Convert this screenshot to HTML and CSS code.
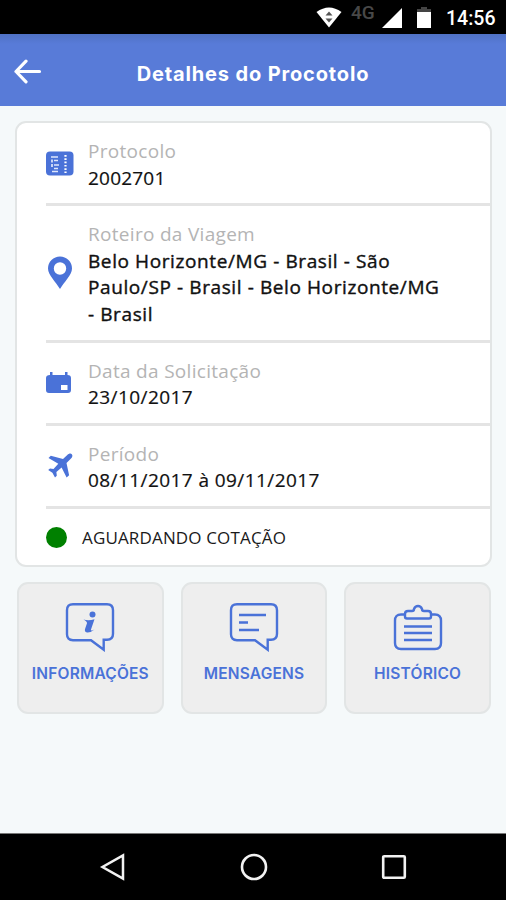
FILE: index.html
```html
<!DOCTYPE html>
<html lang="pt-BR">
<head>
    <meta charset="UTF-8">
    <meta name="viewport" content="width=device-width, initial-scale=1.0">
    <title>Detalhes do Procotolo</title>
    <link rel="stylesheet" href="styles.css">
</head>
<body>

<div class="screen">
    <div class="status-bar">
        <svg class="wifi" width="26" height="21" viewBox="0 0 26 21">
            <path d="M0.5 5 Q13 -4 25.500 5 L13 20.500Z" fill="#fff"/>
            <path d="M9.500 8.500 13 4.500l3.500 4zM9.500 11.500h7L13 15.500z" fill="#555"/>
        </svg>
        <span class="network">4G</span>
        <svg class="signal" width="20" height="20" viewBox="0 0 20 20"><path d="M20 0v20H0z" fill="#fff"/></svg>
        <svg class="battery" width="14" height="21" viewBox="0 0 14 21">
            <path d="M4 0h6v2h4v4H0V2h4z" fill="#444"/>
            <path d="M0 5h14v16H0z" fill="#fff"/>
        </svg>
        <span class="clock">14:56</span>
    </div>

    <header class="header">
        <svg class="back" width="28" height="26" viewBox="0 0 28 26" fill="none" stroke="#fff" stroke-width="3.200" stroke-linecap="round" stroke-linejoin="round">
            <path d="M25.500 12.500H2M12 2.200 2 12.500 12 22.800"/>
        </svg>
        <h1>Detalhes do Procotolo</h1>
    </header>

    <main class="content">
        <section class="card">
            <div class="row">
                <svg class="icon" width="28" height="26" viewBox="0 0 28 26">
                    <rect x="0" y="0.500" width="27.500" height="24" rx="4" fill="#4a72d8"/>
                    <path d="M5 6h7M8 9.500h4M8 14h5M8 17.500h4M6 20.500h6M6 8.500v3M6 13v3" stroke="#dfe7fb" stroke-width="1.700"/>
                    <path d="M19.500 4v18" stroke="#fff" stroke-width="2.200" stroke-dasharray="1.700 1.600"/>
                </svg>
                <div class="info">
                    <p class="label">Protocolo</p>
                    <p class="value value-protocol">2002701</p>
                </div>
            </div>

            <div class="row">
                <svg class="icon" width="28" height="34" viewBox="0 0 28 34">
                    <path d="M14 33C10 26 2 19 2 12.500a12 12 0 0 1 24 0C26 19 18 26 14 33zM14 6.300a6.200 6.200 0 1 0 0 12.400a6.200 6.200 0 0 0 0-12.400z" fill="#4a72d8" fill-rule="evenodd"/>
                </svg>
                <div class="info">
                    <p class="label">Roteiro da Viagem</p>
                    <p class="value value-route">Belo Horizonte/MG - Brasil - São Paulo/SP - Brasil - Belo Horizonte/MG <span class="nowrap">- Brasil</span></p>
                </div>
            </div>

            <div class="row">
                <svg class="icon" width="28" height="22" viewBox="0 0 28 22">
                    <path d="M4 0h2.500v3H19V0h2.500v3Q25 3 25 6v12q0 3-3 3H3q-3 0-3-3V6q0-3 4-3zM15 13v5h6.500v-5z" fill="#4a72d8" fill-rule="evenodd"/>
                </svg>
                <div class="info">
                    <p class="label">Data da Solicitação</p>
                    <p class="value">23/10/2017</p>
                </div>
            </div>

            <div class="row">
                <svg class="icon" width="28" height="26" viewBox="0 0 28 26">
                    <path d="M25.800 1.200C24.700 0 22.800.600 21.300 2L17 6 4.800 2.800 2.500 5l9.800 5.700L7.500 16 4 15.500 2.200 17l4.200 2.700L9 24.500l1.800-1.800-.4-3.600 5.200-4.600 5 9.900 2.500-2.200L20.500 10 25 5.500c1.400-1.500 1.900-3.100.8-4.300z" fill="#4a72d8"/>
                </svg>
                <div class="info">
                    <p class="label">Período</p>
                    <p class="value">08/11/2017 à 09/11/2017</p>
                </div>
            </div>

            <div class="status">
                <span class="dot"></span>
                <span class="status-text">AGUARDANDO COTAÇÃO</span>
            </div>
        </section>

        <nav class="actions">
            <a class="action">
                <svg width="50" height="50" viewBox="0 0 50 50" fill="none" stroke="#4a72d8" stroke-width="2.400">
                    <path d="M8 2.200h34q6 0 6 6v23.500q0 6-6 6h-3.300v10L26 38.200H8q-6 0-6-6v-24q0-6 6-6z"/>
                    <circle cx="27.500" cy="12.500" r="3" fill="#4a72d8" stroke="none"/>
                    <path d="M18.500 17.500q5 1.500 11-.3l-3.600 10.600q0 1.500 3.600-.4-4.500 3.600-7.500 3.100-3-.6-1.800-4l1.800-5.200q.300-1.500-3.500-3.800z" fill="#4a72d8" stroke="none"/>
                </svg>
                <span>INFORMAÇÕES</span>
            </a>
            <a class="action">
                <svg width="50" height="50" viewBox="0 0 50 50" fill="none" stroke="#4a72d8" stroke-width="2.400">
                    <path d="M8 2.200h34q6 0 6 6v23.500q0 6-6 6h-3.300v10L26 38.200H8q-6 0-6-6v-24q0-6 6-6z"/>
                    <path d="M10 13h27M10 20.500h9M10 28h20"/>
                </svg>
                <span>MENSAGENS</span>
            </a>
            <a class="action">
                <svg width="50" height="50" viewBox="0 0 50 50" fill="none" stroke="#4a72d8" stroke-width="2.400">
                    <path d="M12 12.500H8q-6 0-6 6V41q0 6 6 6h34q6 0 6-6V18.500q0-6-6-6h-4"/>
                    <path d="M12 12q0-3 3-3h4q2 0 2-2 1.200-3 4-3t4 3q0 2 2 2h4q3 0 3 3v2.500q0 2-2 2H14q-2 0-2-2z"/>
                    <path d="M11 24.500h28M11 31h28M11 38h28"/>
                </svg>
                <span>HISTÓRICO</span>
            </a>
        </nav>
    </main>

    <div class="nav-bar">
        <svg width="28" height="28" viewBox="0 0 28 28" fill="none" stroke="#f2f2f2" stroke-width="2.500"><path d="M24 2.500v23L3.500 14z"/></svg>
        <svg width="28" height="28" viewBox="0 0 28 28" fill="none" stroke="#f2f2f2" stroke-width="2.600"><circle cx="14" cy="14" r="12"/></svg>
        <svg width="28" height="28" viewBox="0 0 28 28" fill="none" stroke="#f2f2f2" stroke-width="2.600"><rect x="3.200" y="3.200" width="21.600" height="21.600" rx="1"/></svg>
    </div>
</div>

</body>
</html>
```
FILE: styles.css
```css
* {
    box-sizing: border-box;
}
body {
    margin: 0;
    font-family: "Open Sans", "Noto Sans", sans-serif;
    background-color: #f5f9fa;
}
h1, p {
    margin: 0;
}
svg {
    display: block;
    flex-shrink: 0;
}
.screen {
    height: 900px;
    display: flex;
    flex-direction: column;
    overflow: hidden;
}

/* Android status bar */
.status-bar {
    height: 34px;
    padding: 0 10px 0 316px;
    display: flex;
    align-items: flex-start;
    background-color: #000;
    color: #fff;
    font-family: Roboto, sans-serif;
    white-space: nowrap;
}
.wifi {
    margin-top: 7px;
}
.network {
    width: 25px;
    margin: 3px 6px 0 9px;
    color: #484848;
    font-size: 19px;
    font-weight: 500;
    line-height: 20px;
}
.signal {
    margin-top: 8px;
}
.battery {
    margin: 7px 0 0 15px;
}
.clock {
    margin: 7px 0 0 15px;
    font-size: 19.5px;
    font-weight: 500;
    line-height: 24px;
}

.header {
    height: 72px;
    padding: 4px 14px 0;
    display: grid;
    grid-template-columns: 28px 1fr 28px;
    align-items: center;
    background: linear-gradient(#4f71c4, #587bd8 10px);
    color: #fff;
}
.header h1 {
    font-family: Inter, sans-serif;
    font-size: 20px;
    font-weight: 700;
    letter-spacing: 0.85px;
    line-height: 26px;
    text-align: center;
    white-space: nowrap;
    padding-top: 3px;
}

.content {
    flex: 1;
    padding: 15px 14px 0 15px;
}
.card {
    height: 446px;
    border: 2px solid #e2e5e5;
    border-radius: 11px;
    background-color: #fff;
}
.row {
    display: flex;
    align-items: center;
    margin-left: 29px;
    padding: 13px 40px 12px 0;
    border-bottom: 3px solid #e4e4e4;
}
.icon {
    margin-right: 14px;
}
.info {
    padding-top: 2px;
}
.label, .value {
    font-size: 19px;
    line-height: 26.6px;
    white-space: nowrap;
}
.label {
    color: #b4b4b4;
    letter-spacing: 0.3px;
}
.value {
    color: #111;
    font-weight: 500;
    letter-spacing: 0.42px;
    -webkit-text-stroke: 0.2px #111;
}
.value-protocol {
    letter-spacing: 0.2px;
}
.value-route {
    width: 362px;
    letter-spacing: 0.6px;
    white-space: normal;
    -webkit-text-stroke-width: 0.4px;
}
.nowrap {
    white-space: nowrap;
}
.status {
    height: 57px;
    display: flex;
    align-items: center;
    padding-left: 29px;
}
.dot {
    width: 21px;
    height: 21px;
    margin-right: 15px;
    border-radius: 50%;
    background-color: #008000;
}
.status-text {
    color: #1a1a1a;
    font-size: 17px;
    letter-spacing: 0.15px;
    white-space: nowrap;
}

.actions {
    display: grid;
    grid-template-columns: repeat(3, 1fr);
    gap: 17px;
    margin: 15px 1px 0 2px;
}
.action {
    height: 132px;
    padding-top: 18px;
    display: flex;
    flex-direction: column;
    align-items: center;
    border: 2px solid #e2e5e5;
    border-radius: 11px;
    background-color: #eee;
    color: #4a72d8;
    font-family: Inter, sans-serif;
    font-size: 15.5px;
    font-weight: 600;
    letter-spacing: 0.2px;
}
.action span {
    margin-top: 11px;
    line-height: 22px;
}

/* Android navigation buttons */
.nav-bar {
    height: 67px;
    padding: 0 98px 0 99px;
    display: flex;
    align-items: center;
    justify-content: space-between;
    border-top: 1px solid #777;
    background-color: #000;
}
```
